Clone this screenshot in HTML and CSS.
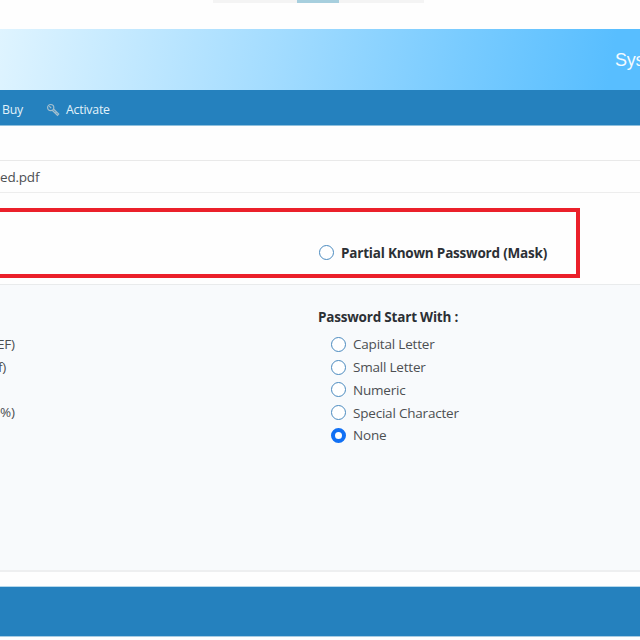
FILE: index.html
```
<!DOCTYPE html>
<html lang="en">
<head>
<meta charset="utf-8">
<title>Password Recovery</title>
<link rel="stylesheet" href="styles.css">
</head>
<body>
<div class="tabstrip"><span class="tab-active"></span></div>
<header class="banner"><span class="brand">Sys</span></header>
<nav class="menu">
  <span class="menu-item buy">Buy</span>
  <span class="menu-item activate">
    <svg class="key" viewBox="0 0 14 14" aria-hidden="true"><path d="M6.2 7.3 11.5 12.3 12.7 11 7.5 6" /><circle cx="4.7" cy="4.6" r="3.1"/><path d="M3.3 3.2 5.2 5.1M9.4 10.2l1.1-1.1"/></svg>
    <span class="activate-label">Activate</span>
  </span>
</nav>
<main>
  <div class="file"><span class="file-name">ed.pdf</span></div>
  <section class="mask">
    <label class="choice"><span class="radio"></span><b class="mask-label">Partial Known Password (Mask)</b></label>
  </section>
  <section class="panel">
    <ul class="ranges">
      <li class="range-hex">EF)</li>
      <li class="range-lower">f)</li>
      <li></li>
      <li class="range-special">%)</li>
    </ul>
    <div class="start">
      <h2><span class="title">Password Start With :</span></h2>
      <label class="choice"><span class="radio"></span><span class="capital">Capital Letter</span></label>
      <label class="choice"><span class="radio"></span><span class="small">Small Letter</span></label>
      <label class="choice"><span class="radio"></span><span class="numeric">Numeric</span></label>
      <label class="choice"><span class="radio"></span><span class="special">Special Character</span></label>
      <label class="choice"><span class="radio checked"></span><span class="none">None</span></label>
    </div>
  </section>
</main>
<footer class="footer"></footer>
</body>
</html>
```
FILE: styles.css
```
* { box-sizing: border-box; }
body {
  margin: 0;
  width: 640px;
  height: 640px;
  overflow: hidden;
  background: #fefefe;
  color: #4c4f52;
  font: 13.5px/20px "Open Sans", "Noto Sans", sans-serif;
  letter-spacing: -0.2px;
  white-space: nowrap;
}
.tabstrip {
  width: 211px;
  height: 3px;
  margin: 0 0 26px 213px;
  padding-left: 84px;
  background: #f4f4f4;
}
.tab-active {
  display: block;
  width: 42px;
  height: 3px;
  background: #a7cfde;
}
.banner {
  display: flex;
  align-items: center;
  height: 61px;
  padding-left: 615px;
  overflow: hidden;
  background: linear-gradient(100deg, #dff4ff 0%, #c6eaff 18%, #a3dcff 43%, #78cbff 72%, #58beff 95%);
}
.brand {
  color: #f4fbff;
  font: 18px/22px "Liberation Sans", sans-serif;
}
.menu {
  display: flex;
  align-items: center;
  height: 36px;
  padding: 4px 0 0 2px;
  background: #2581be;
  border-bottom: 1px solid #8fc0dd;
  color: #e2f2fa;
  font-size: 12.3px;
}
.buy { width: 44px; }
.activate { display: flex; align-items: center; }
.key {
  width: 14px;
  height: 14px;
  margin-right: 6px;
  fill: none;
  stroke: #a4bfce;
  stroke-width: 1.2;
}
.file {
  display: flex;
  align-items: center;
  height: 33px;
  margin-top: 34px;
  border-top: 1px solid #e9e9e9;
  border-bottom: 1px solid #ededed;
}
.mask {
  display: flex;
  align-items: center;
  width: 580px;
  height: 70px;
  margin-top: 15px;
  padding: 19px 0 0 319px;
  border: 4px solid #eb202a;
  border-left: 0;
}
.choice { display: flex; align-items: center; }
.radio {
  flex: none;
  width: 15px;
  height: 15px;
  margin-right: 7px;
  border: 1px solid #4a8abf;
  border-radius: 50%;
  background: #fff;
}
.radio.checked { border: 4px solid #1170f4; }
.mask-label, .title { color: #2c3035; font-weight: 700; }
.panel {
  display: flex;
  height: 288px;
  margin-top: 6px;
  border-top: 1px solid #e9ebec;
  border-bottom: 2px solid #eeeff0;
  background: #f8fafc;
}
.ranges {
  flex: none;
  width: 318px;
  margin: 0;
  padding: 48px 0 0;
  list-style: none;
}
.ranges li { height: 22.75px; line-height: 22.75px; }
.range-hex { margin-left: -3px; }
.range-lower { margin-left: -2px; }
.start { padding-top: 22px; }
.start h2 { margin: 0 0 6px; font-size: 13.5px; line-height: 20px; }
.start .choice { height: 22.75px; margin-left: 13px; }
.footer {
  height: 51px;
  margin-top: 14px;
  background: #2581be;
  border-top: 1px solid #b4d8ec;
  border-bottom: 1px solid #a8cce3;
}
```
